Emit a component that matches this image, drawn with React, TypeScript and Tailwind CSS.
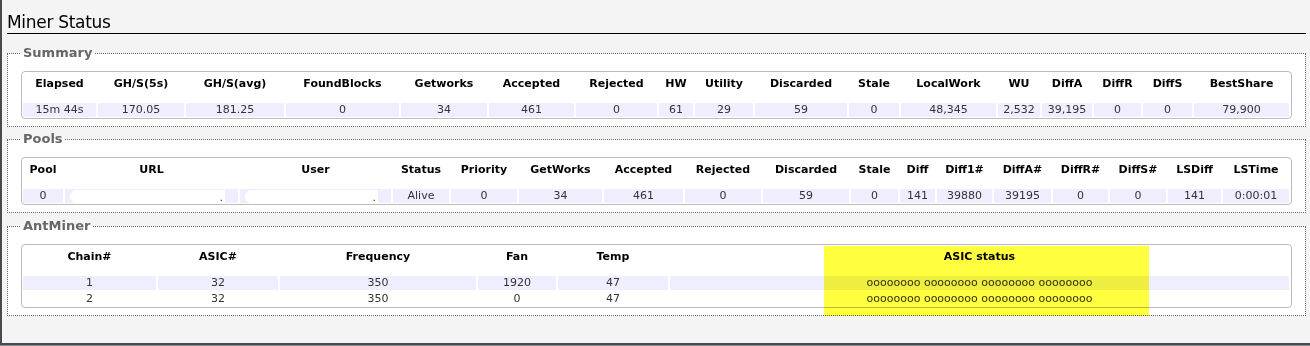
import React from 'react';

// Miner status page (LuCI style) — summary, pools, antminer chains

const font = "font-['DejaVu_Sans',Verdana,sans-serif]";

const summaryHead = ['Elapsed', 'GH/S(5s)', 'GH/S(avg)', 'FoundBlocks', 'Getworks', 'Accepted', 'Rejected', 'HW', 'Utility', 'Discarded', 'Stale', 'LocalWork', 'WU', 'DiffA', 'DiffR', 'DiffS', 'BestShare'];
const summaryRow = ['15m 44s', '170.05', '181.25', '0', '34', '461', '0', '61', '29', '59', '0', '48,345', '2,532', '39,195', '0', '0', '79,900'];

const poolHead = ['Pool', 'URL', 'User', 'Status', 'Priority', 'GetWorks', 'Accepted', 'Rejected', 'Discarded', 'Stale', 'Diff', 'Diff1#', 'DiffA#', 'DiffR#', 'DiffS#', 'LSDiff', 'LSTime'];
const poolRow = ['0', '', '', 'Alive', '0', '34', '461', '0', '59', '0', '141', '39880', '39195', '0', '0', '141', '0:00:01'];

const chainHead = ['Chain#', 'ASIC#', 'Frequency', 'Fan', 'Temp', 'ASIC status'];
const chainRows = [
  ['1', '32', '350', '1920', '47', 'oooooooo oooooooo oooooooo oooooooo'],
  ['2', '32', '350', '0', '47', 'oooooooo oooooooo oooooooo oooooooo'],
];

function HeadCell({ text }: { text: string }) {
  return (
    <div className="h-[28px] pt-[4px] text-center text-[11px] leading-[13px] font-bold text-black whitespace-nowrap">
      {text}
    </div>
  );
}

function DataCell({ text, shaded }: { text: string; shaded: boolean }) {
  return (
    <div className={`h-[14px] text-center text-[11px] leading-[14px] text-[#333] whitespace-nowrap ${shaded ? 'bg-[#eeeeff]' : 'bg-white'}`}>
      {text}
    </div>
  );
}

// redacted url / user cell
function Blanked({ width }: { width: string }) {
  return (
    <div className="h-[14px] bg-[#eeeeff] flex items-center pl-[5px]">
      <div className={`h-[13px] ${width} bg-white rounded-l-[7px] flex items-end justify-end pr-[2px]`}>
        <span className="text-[11px] leading-[11px] text-[#333]">.</span>
      </div>
    </div>
  );
}

function Section({ title, children, className = '' }: { title: string; children: React.ReactNode; className?: string }) {
  return (
    <fieldset className={`border border-dotted border-[#666] bg-white pt-[10px] px-[13px] pb-[7px] ${className}`}>
      <legend className="px-[2px] ml-0 text-[13px] leading-[16px] font-bold text-[#666]">{title}</legend>
      {children}
    </fieldset>
  );
}

export default function App() {
  return (
    <div className={`w-[1310px] h-[346px] bg-[#8c8ca0] ${font}`}>
      <div className="h-[345px] bg-[#f4f4f4] border-l-2 border-b-2 border-[#4a4a4a] pl-[5px] pr-[4px] pt-[12px]">
        <h2 className="text-[17px] leading-[20px] tracking-[-0.3px] text-black pb-[1px] border-b border-black">
          Miner Status
        </h2>

        <Section title="Summary" className="mt-[11px]">
          <div className="border border-[#bbb] rounded-[4px] p-[1px] bg-white">
            <div className="grid grid-cols-[73px_86px_98px_113px_86px_85px_81px_34px_58px_92px_50px_95px_42px_50px_47px_49px_95px] gap-[2px]">
              {summaryHead.map((h) => (
                <HeadCell key={h} text={h} />
              ))}
              {summaryRow.map((v, i) => (
                <DataCell key={i} text={v} shaded />
              ))}
            </div>
          </div>
        </Section>

        <Section title="Pools" className="mt-[4px]">
          <div className="border border-[#bbb] rounded-[4px] p-[1px] bg-white">
            <div className="grid grid-cols-[40px_173px_151px_56px_66px_83px_79px_76px_86px_47px_35px_55px_57px_55px_56px_53px_66px] gap-[2px]">
              {poolHead.map((h) => (
                <HeadCell key={h} text={h} />
              ))}
              {poolRow.map((v, i) =>
                i === 1 ? (
                  <Blanked key={i} width="w-[155px]" />
                ) : i === 2 ? (
                  <Blanked key={i} width="w-[133px]" />
                ) : (
                  <DataCell key={i} text={v} shaded />
                )
              )}
            </div>
          </div>
        </Section>

        <Section title="AntMiner" className="mt-[5px]">
          <div className="relative border border-[#bbb] rounded-[4px] p-[1px] bg-white">
            <div className="grid grid-cols-[133px_120px_196px_78px_110px_619px] gap-[2px]">
              {chainHead.map((h) => (
                <HeadCell key={h} text={h} />
              ))}
              {chainRows.map((row, r) =>
                row.map((v, i) => <DataCell key={`${r}-${i}`} text={v} shaded={r === 0} />)
              )}
            </div>
            {/* highlighter mark over the ASIC status column */}
            <div className="absolute left-[802px] top-[1px] w-[325px] h-[70px] bg-[#ffff40] mix-blend-multiply pointer-events-none" />
          </div>
        </Section>
      </div>
    </div>
  );
}
